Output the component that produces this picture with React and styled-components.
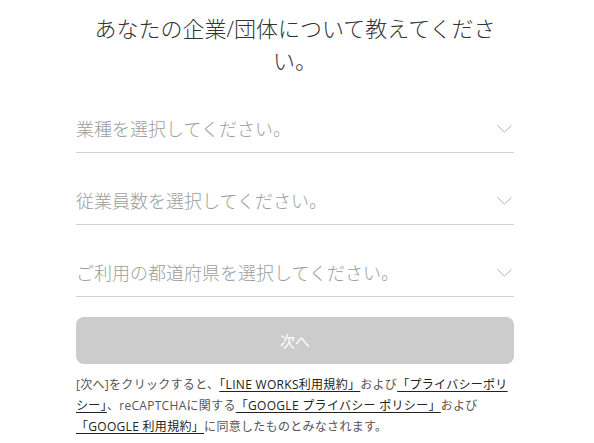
import React from "react";
import styled, { createGlobalStyle } from "styled-components";

const GlobalStyle = createGlobalStyle`
  html, body {
    margin: 0;
    padding: 0;
    background: #ffffff;
  }
  body {
    font-family: "Open Sans", "Noto Sans CJK JP", sans-serif;
    color: #333;
  }
`;

const fields = [
  "業種を選択してください。",
  "従業員数を選択してください。",
  "ご利用の都道府県を選択してください。",
];

const Chevron = () => (
  <svg width="15" height="8" viewBox="0 0 15 8" fill="none">
    <path d="M0.5 0.5 L7.5 7 L14.5 0.5" stroke="#b4b4b4" strokeWidth="1" />
  </svg>
);

const App = () => (
  <>
    <GlobalStyle />
    <Wrapper>
      <Title>あなたの企業/団体について教えてください。</Title>
      <Fields>
        {fields.map((label) => (
          <Field key={label}>
            <Placeholder>{label}</Placeholder>
            <Chevron />
          </Field>
        ))}
      </Fields>
      <NextButton disabled>次へ</NextButton>
      <Notice>
        [次へ]をクリックすると、<Link>「LINE WORKS利用規約」</Link>および
        <Link>「プライバシーポリシー」</Link>、reCAPTCHAに関する
        <Link>「GOOGLE プライバシー ポリシー」</Link>および
        <Link>「GOOGLE 利用規約」</Link>に同意したものとみなされます。
      </Notice>
    </Wrapper>
  </>
);

export default App;

const Wrapper = styled.div`
  width: 438px;
  margin: 0 80px 0 76px;
  padding-top: 12px;
  display: flex;
  flex-direction: column;
`;

const Title = styled.h1`
  margin: 0;
  font-size: 22px;
  font-weight: 300;
  line-height: 32px;
  text-align: center;
  color: #333;
`;

const Fields = styled.div`
  display: flex;
  flex-direction: column;
  gap: 24px;
  margin-top: 29px;
`;

const Field = styled.div`
  display: flex;
  align-items: center;
  justify-content: space-between;
  height: 47px;
  border-bottom: 1px solid #d2d2d2;
  padding-right: 2px;
`;

const Placeholder = styled.span`
  font-size: 18px;
  font-weight: 300;
  line-height: 24px;
  color: #9d9d9d;
`;

const NextButton = styled.button`
  margin-top: 20px;
  height: 47px;
  width: 100%;
  border: none;
  border-radius: 8px;
  background: #cccccc;
  color: #ffffff;
  font-family: inherit;
  font-size: 15px;
  cursor: default;
`;

const Notice = styled.p`
  margin: 10px 0 0;
  font-size: 12px;
  line-height: 21px;
  letter-spacing: 0.3px;
  color: #555;
`;

const Link = styled.a`
  color: #222;
  text-decoration: underline;
  text-underline-offset: 2px;
  cursor: pointer;
`;
